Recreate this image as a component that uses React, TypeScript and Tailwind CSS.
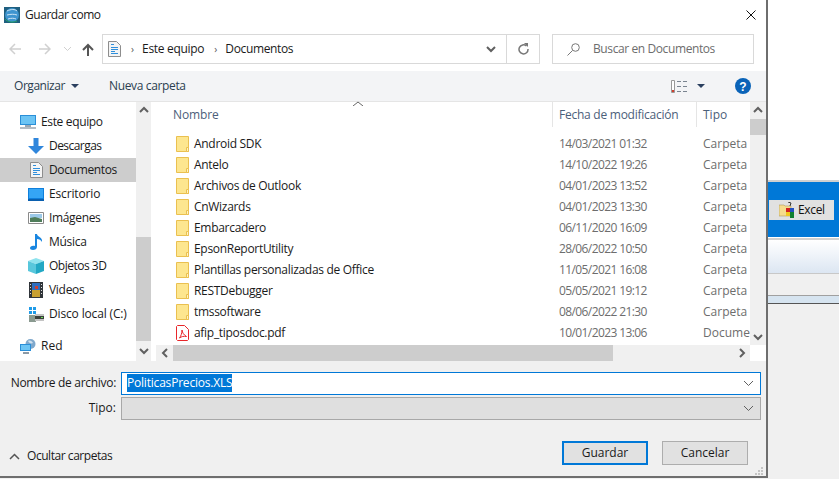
const font = "font-['Open_Sans','Noto_Sans',sans-serif]";

const sideItems = [
    { name: "Descargas", icon: "down", track: "tracking-[-0.55px]" },
    { name: "Documentos", icon: "doc", active: true, track: "tracking-[-0.35px]" },
    { name: "Escritorio", icon: "desk", track: "tracking-[-0.15px]" },
    { name: "Imágenes", icon: "img", track: "tracking-[-0.35px]" },
    { name: "Música", icon: "music", track: "tracking-[-0.3px]" },
    { name: "Objetos 3D", icon: "cube", track: "tracking-[-0.5px]" },
    { name: "Videos", icon: "film", track: "tracking-[-0.3px]" },
    { name: "Disco local (C:)", icon: "disk", track: "tracking-[-0.15px]" },
];

const files = [
    { name: "Android SDK", date: "14/03/2021 01:32", type: "Carpeta d" },
    { name: "Antelo", date: "14/10/2022 19:26", type: "Carpeta d" },
    { name: "Archivos de Outlook", date: "04/01/2023 13:52", type: "Carpeta d" },
    { name: "CnWizards", date: "04/01/2023 13:30", type: "Carpeta d" },
    { name: "Embarcadero", date: "06/11/2020 16:09", type: "Carpeta d" },
    { name: "EpsonReportUtility", date: "28/06/2022 10:50", type: "Carpeta d" },
    { name: "Plantillas personalizadas de Office", date: "11/05/2021 16:08", type: "Carpeta d" },
    { name: "RESTDebugger", date: "05/05/2021 19:12", type: "Carpeta d" },
    { name: "tmssoftware", date: "08/06/2022 21:30", type: "Carpeta d" },
    { name: "afip_tiposdoc.pdf", date: "10/01/2023 13:06", type: "Documen", pdf: true },
];

function Folder() {
    return (
        <svg width="13" height="16" viewBox="0 0 13 16" className="shrink-0">
            <path d="M.5.5h12v15H.5z" fill="#fde68f" stroke="#eac050" />
            <path d="M10.5 11.5h2v4h-2z" fill="#fff3c4" stroke="#eac050" />
        </svg>
    );
}

function Pdf() {
    return (
        <svg width="13" height="16" viewBox="0 0 13 16" className="shrink-0">
            <path d="M1.5.5h7l4 4v10l-1 1h-10l-1-1v-13z" fill="#fff" stroke="#e8272a" />
            <path d="M6 5c.5 3 1.500 4.500 4.500 6.500-3-.5-5 0-7 1.500C5 11 6 8 6 5z" fill="none" stroke="#e8272a" />
        </svg>
    );
}

function DocIcon() {
    return (
        <svg width="13" height="16" viewBox="0 0 13 16">
            <path d="M.5.5h8l4 4v11H.5z" fill="#f4f4f4" stroke="#8d8d8d" />
            <path d="M3 3.500h3M3 6.500h7M3 8.500h7M3 10.500h4M3 12.500h7" stroke="#2f8fdc" />
        </svg>
    );
}

function Chevron({ dir, color = "#606060" }: { dir: "up" | "down" | "left" | "right"; color?: string }) {
    const d = {
        up: "M2 7l4-4 4 4",
        down: "M2 4l4 4 4-4",
        left: "M8 2L4 6l4 4",
        right: "M4 2l4 4-4 4",
    }[dir];
    return (
        <svg width="12" height="12" viewBox="0 0 12 12">
            <path d={d} fill="none" stroke={color} strokeWidth="2" />
        </svg>
    );
}

function ThinDown() {
    return (
        <svg width="11" height="7" viewBox="0 0 11 7">
            <path d="M1 1l4.500 4.500L10 1" fill="none" stroke="#606060" />
        </svg>
    );
}

function SideIcon({ kind }: { kind: string }) {
    if (kind === "down")
        return (
            <svg width="16" height="16" viewBox="0 0 16 16">
                <path d="M5.500 0h5v8H16l-8 8-8-8h5.500z" fill="#2f86dc" />
            </svg>
        );
    if (kind === "doc") return <DocIcon />;
    if (kind === "desk")
        return (
            <svg width="16" height="13" viewBox="0 0 16 13">
                <path d="M0 0h16v13H0z" fill="#0f7fdc" />
                <path d="M1 1h14v9H1z" fill="#35a5f5" />
                <path d="M0 11h16v2H0z" fill="#0a5fae" />
            </svg>
        );
    if (kind === "img")
        return (
            <svg width="16" height="12" viewBox="0 0 16 12">
                <path d="M.5.5h15v11H.5z" fill="#fff" stroke="#8a8a8a" />
                <path d="M2 2h12v4H2z" fill="#9cc9e8" />
                <path d="M2 6l5-1 7 2v3H2z" fill="#4f7d5a" />
            </svg>
        );
    if (kind === "music")
        return (
            <svg width="13" height="16" viewBox="0 0 13 16">
                <path d="M5 0h2c0 3 6 3 5 8-1-2-3-3-5-3v8c0 2-2 3-4 3s-3-1-3-2 2-3 5-2z" fill="#1a86e0" />
            </svg>
        );
    if (kind === "cube")
        return (
            <svg width="16" height="16" viewBox="0 0 16 16">
                <path d="M8 0l8 3-8 3-8-3z" fill="#8fe3ee" />
                <path d="M0 3l8 3v10l-8-3z" fill="#58c7dc" />
                <path d="M16 3L8 6v10l8-3z" fill="#22a8c4" />
            </svg>
        );
    if (kind === "film")
        return (
            <svg width="14" height="16" viewBox="0 0 14 16">
                <path d="M0 0h14v16H0z" fill="#30353a" />
                <path d="M3 1h8v7H3z" fill="#2f6fc0" />
                <path d="M3 8h8v7H3z" fill="#c8a030" />
                <path d="M6 4h3v3H6z" fill="#d04030" />
                <path d="M1 2h1v1H1zM1 5h1v1H1zM1 8h1v1H1zM1 11h1v1H1zM12 2h1v1h-1zM12 5h1v1h-1zM12 8h1v1h-1zM12 11h1v1h-1z" fill="#ddd" />
            </svg>
        );
    return (
        <svg width="16" height="16" viewBox="0 0 16 16">
            <path d="M1 1h3v3H1zM5 1h3v3H5zM1 5h3v3H1zM5 5h3v3H5z" fill="#1f9be8" />
            <path d="M1 9h7v7H1z" fill="#8a9a90" />
            <path d="M7 8h9v7H7z" fill="#c4c4c4" />
            <path d="M7 10h9v3H7z" fill="#3a3f3a" />
            <path d="M13 11h2v1h-2z" fill="#6fe05a" />
        </svg>
    );
}

function Monitor() {
    return (
        <svg width="16" height="14" viewBox="0 0 16 14">
            <path d="M0 0h16v10H0z" fill="#2a8fd8" />
            <path d="M1 1h14v8H1z" fill="#6cc4f4" />
            <path d="M5 10h6v2H5z" fill="#9aa8b4" />
            <path d="M0 12h16v2H0z" fill="#b4bcc4" />
        </svg>
    );
}

function Network() {
    return (
        <svg width="16" height="15" viewBox="0 0 16 15">
            <circle cx="10.500" cy="5" r="5" fill="#7fa8cc" />
            <path d="M8 2c2-1 4 0 5 2-2 1-4 0-5-2z" fill="#cfe0ee" />
            <path d="M0 5h11v7H0z" fill="#2a8fd8" />
            <path d="M1 6h9v5H1z" fill="#6cc4f4" />
            <path d="M3 13h6v2H3z" fill="#8c9aa6" />
        </svg>
    );
}

function GlobeIcon() {
    return (
        <svg width="16" height="16" viewBox="0 0 16 16">
            <path d="M0 0h16v16H0z" fill="#1f5f80" />
            <circle cx="8" cy="8" r="7" fill="#3f95cf" />
            <path d="M3 4c4-2 8-2 10 0M3 8c4-1 7-1 10 0M4 12c3-1 6-1 8 0" stroke="#cfe6f5" fill="none" />
            <path d="M1 12c2 3 8 4 12 2" stroke="#27a36a" fill="none" />
        </svg>
    );
}

function ExcelIcon() {
    return (
        <svg width="16" height="16" viewBox="0 0 16 16" className="shrink-0">
            <path d="M0 3h5l1 1h6v10H0z" fill="#f6dc8c" stroke="#b09a60" strokeWidth=".6" />
            <path d="M9 0l3 1-1 3" stroke="#333" fill="none" />
            <path d="M7 6h4v4H7z" fill="#d02020" />
            <path d="M11 6h4v4h-4z" fill="#2050c0" />
            <path d="M7 10h4v4H7z" fill="#f0c820" />
            <path d="M11 10h4v6h-4z" fill="#108030" />
        </svg>
    );
}

function NavArrow({ right, color }: { right?: boolean; color: string }) {
    return (
        <svg width="12" height="12" viewBox="0 0 12 12" style={{ transform: right ? "scaleX(-1)" : undefined }}>
            <path d="M12 6H1.500M6 1L1 6l5 5" fill="none" stroke={color} strokeWidth="1.500" />
        </svg>
    );
}

export default function App() {
    return (
        <div className={`${font} flex h-[479px] w-[839px] overflow-hidden bg-[#f0f0f0] text-[12px] text-[#1a1a1a]`}>
            <div className="relative flex h-[478px] w-[768px] shrink-0 flex-col border-r-2 border-b-2 border-[#6e6e6e] bg-white">
                {/* title */}
                <div className="flex h-[30px] shrink-0 items-center pl-[4px] pr-[10px]">
                    <GlobeIcon />
                    <span className="ml-[5px] tracking-[-0.45px]">Guardar como</span>
                    <svg width="10" height="10" viewBox="0 0 10 10" className="ml-auto">
                        <path d="M.5.500l9 9M9.500.500l-9 9" stroke="#111" />
                    </svg>
                </div>

                {/* nav */}
                <div className="flex h-[41px] shrink-0 items-start pt-[4px]">
                    <div className="flex h-[30px] w-[102px] shrink-0 items-center pl-[9px]">
                        <NavArrow color="#d0d0d0" />
                        <span className="ml-[18px]"><NavArrow right color="#d0d0d0" /></span>
                        <span className="ml-[12px]">
                            <svg width="9" height="6" viewBox="0 0 9 6"><path d="M1 1l3.500 3.500L8 1" fill="none" stroke="#d0d0d0" /></svg>
                        </span>
                        <svg width="12" height="13" viewBox="0 0 12 13" className="ml-[10px]">
                            <path d="M6 13V2M1 7l5-5 5 5" fill="none" stroke="#555" strokeWidth="2" />
                        </svg>
                    </div>
                    <div className="flex h-[30px] w-[438px] shrink-0 items-center border border-[#d9d9d9] pl-[5px]">
                        <DocIcon />
                        <span className="ml-[10px] text-[10px] text-[#555]">›</span>
                        <span className="ml-[8px] tracking-[-0.3px]">Este equipo</span>
                        <span className="ml-[10px] text-[10px] text-[#555]">›</span>
                        <span className="ml-[8px] tracking-[-0.35px]">Documentos</span>
                        <div className="ml-auto flex h-full items-center">
                            <Chevron dir="down" />
                            <div className="ml-[9px] flex h-full w-[33px] items-center justify-center border-l border-[#d9d9d9]">
                                <svg width="12" height="12" viewBox="0 0 12 12">
                                    <path d="M9.500 3A4.500 4.500 0 1 0 11 6" fill="none" stroke="#777" strokeWidth="1.500" />
                                    <path d="M7 0h4v4z" fill="#777" />
                                </svg>
                            </div>
                        </div>
                    </div>
                    <div className="ml-[12px] flex h-[30px] w-[202px] shrink-0 items-center border border-[#d9d9d9] pl-[14px] text-[#6d6d6d]">
                        <svg width="13" height="13" viewBox="0 0 13 13">
                            <circle cx="8.500" cy="4.500" r="3.800" fill="none" stroke="#777" />
                            <path d="M5.500 7.500L.5 12.500" stroke="#777" />
                        </svg>
                        <span className="ml-[13px] tracking-[-0.4px]">Buscar en Documentos</span>
                    </div>
                </div>

                {/* toolbar */}
                <div className="flex h-[31px] shrink-0 items-center border-b border-[#e5e5e5] bg-[#f3f4f6] pl-[14px] pr-[15px] text-[#2c3e50]">
                    <span className="tracking-[-0.45px]">Organizar</span>
                    <svg width="8" height="4" viewBox="0 0 8 4" className="ml-[6px]"><path d="M0 0h8L4 4z" fill="#2a3f5f" /></svg>
                    <span className="ml-[30px] tracking-[-0.35px]">Nueva carpeta</span>
                    <svg width="16" height="13" viewBox="0 0 16 13" className="ml-auto">
                        <path d="M.5.500h3v12h-3z" fill="#fff" stroke="#999" />
                        <path d="M6 1.500h4M12 1.500h4M6 6.500h4M12 6.500h4M6 11.500h4M12 11.500h4" stroke="#7a8490" />
                        <path d="M1 10h2v2H1z" fill="#d04030" />
                    </svg>
                    <svg width="8" height="4" viewBox="0 0 8 4" className="ml-[10px]"><path d="M0 0h8L4 4z" fill="#2a3f5f" /></svg>
                    <svg width="16" height="16" viewBox="0 0 16 16" className="ml-[30px]">
                        <circle cx="8" cy="8" r="8" fill="#0a63b8" />
                        <text x="8" y="12.500" textAnchor="middle" fontSize="12" fontWeight="700" fill="#fff" fontFamily="Liberation Sans">?</text>
                    </svg>
                </div>

                {/* main */}
                <div className="flex h-[259px] shrink-0">
                    <div className="flex w-[136px] shrink-0 flex-col pt-[8px]">
                        <div className="flex h-[24px] items-center pl-[20px]">
                            <Monitor />
                            <span className="ml-[5px] tracking-[-0.35px]">Este equipo</span>
                        </div>
                        {sideItems.map((item) => (
                            <div key={item.name} className={`flex h-[24px] items-center ${item.active ? "bg-[#cdcdcd]" : ""}`}>
                                <span className="ml-[28px] flex w-[16px] justify-center">
                                    <SideIcon kind={item.icon} />
                                </span>
                                <span className={`ml-[5px] whitespace-nowrap ${item.track}`}>{item.name}</span>
                            </div>
                        ))}
                        <div className="mt-[8px] flex h-[24px] items-center pl-[20px]">
                            <Network />
                            <span className="ml-[5px]">Red</span>
                        </div>
                    </div>
                    <div className="flex w-[15px] shrink-0 flex-col bg-[#f0f0f0]">
                        <div className="flex h-[17px] items-center justify-center"><Chevron dir="up" /></div>
                        <div className="mt-[118px] h-[104px] bg-[#cdcdcd]" />
                        <div className="flex h-[20px] items-center justify-center"><Chevron dir="down" /></div>
                    </div>
                    <div className="flex w-[5px] shrink-0" />
                    <div className="flex min-w-0 flex-1 flex-col">
                        <div className="flex min-h-0 flex-1">
                            <div className="flex min-w-0 flex-1 flex-col">
                                <div className="relative flex h-[25px] shrink-0 items-center text-[#4c607a]">
                                    <span className="absolute left-[197px] top-[-1px] leading-none">
                                        <svg width="10" height="5" viewBox="0 0 10 5"><path d="M0 5l5-4 5 4" fill="none" stroke="#666" /></svg>
                                    </span>
                                    <div className="w-[396px] pl-[17px] tracking-[-0.1px]">Nombre</div>
                                    <div className="w-[144px] self-stretch flex items-center border-l border-[#e5e5e5] pl-[6px] tracking-[-0.25px]">Fecha de modificación</div>
                                    <div className="flex-1 self-stretch flex items-center border-l border-[#e5e5e5] pl-[6px]">Tipo</div>
                                </div>
                                <div className="flex flex-col pt-[6px]">
                                    {files.map((f) => (
                                        <div key={f.name} className="flex h-[21px] items-center overflow-hidden whitespace-nowrap">
                                            <div className="flex w-[397px] shrink-0 items-center pl-[20px]">
                                                {f.pdf ? <Pdf /> : <Folder />}
                                                <span className="ml-[5px] tracking-[-0.3px]">{f.name}</span>
                                            </div>
                                            <div className="w-[144px] shrink-0 pl-[6px] tracking-[-0.6px] text-[#6d6d6d]">{f.date}</div>
                                            <div className="w-[54px] shrink-0 overflow-hidden pl-[6px] text-[#6d6d6d]">{f.type}</div>
                                        </div>
                                    ))}
                                </div>
                            </div>
                            <div className="flex w-[16px] shrink-0 flex-col bg-[#f0f0f0]">
                                <div className="flex h-[17px] items-center justify-center"><Chevron dir="up" /></div>
                                <div className="h-[16px] bg-[#cdcdcd]" />
                                <div className="flex-1" />
                                <div className="flex h-[16px] items-center justify-center"><Chevron dir="down" /></div>
                            </div>
                        </div>
                        <div className="flex h-[16px] shrink-0">
                            <div className="flex flex-1 bg-[#f0f0f0]">
                                <div className="flex w-[17px] items-center justify-center"><Chevron dir="left" /></div>
                                <div className="w-[440px] bg-[#cdcdcd]" />
                                <div className="flex-1" />
                                <div className="flex w-[17px] items-center justify-center"><Chevron dir="right" /></div>
                            </div>
                            <div className="w-[16px] bg-white" />
                        </div>
                    </div>
                </div>

                {/* form */}
                <div className="relative flex min-h-0 flex-1 flex-col bg-[#f0f0f0] pt-[10px]">
                    <div className="flex h-[24px] items-center">
                        <span className="w-[116px] text-right tracking-[-0.3px]">Nombre de archivo:</span>
                        <div className="ml-[5px] flex h-[23px] w-[640px] items-center border border-[#0078d7] bg-white pl-[5px] pr-[6px]">
                            <span className="bg-[#0078d7] leading-[18px] text-white tracking-[-0.2px]">PoliticasPrecios.XLS</span>
                            <span className="ml-auto"><ThinDown /></span>
                        </div>
                    </div>
                    <div className="mt-[1px] flex h-[24px] items-center">
                        <span className="w-[116px] text-right">Tipo:</span>
                        <div className="ml-[5px] flex h-[23px] w-[640px] items-center border border-[#a8a8a8] bg-[#dfdfdf] pr-[6px]">
                            <span className="ml-auto"><ThinDown /></span>
                        </div>
                    </div>
                    <div className="mt-[20px] flex items-center pr-[18px]">
                        <svg width="11" height="7" viewBox="0 0 11 7" className="ml-[9px] mt-[7px]"><path d="M1 6l4.500-4.500L10 6" fill="none" stroke="#555" strokeWidth="1.500" /></svg>
                        <span className="ml-[7px] mt-[7px] tracking-[-0.45px]">Ocultar carpetas</span>
                        <button className="ml-auto h-[24px] w-[86px] border-2 border-[#0078d7] bg-[#e1e1e1]">Guardar</button>
                        <button className="ml-[14px] h-[24px] w-[86px] border border-[#adadad] bg-[#e1e1e1]">Cancelar</button>
                    </div>
                    <svg width="8" height="8" viewBox="0 0 8 8" className="absolute bottom-[1px] right-[3px]">
                        <path d="M6 0h2v2H6zM3 3h2v2H3zM6 3h2v2H6zM0 6h2v2H0zM3 6h2v2H3zM6 6h2v2H6z" fill="#c4c4c4" />
                    </svg>
                </div>
            </div>

            {/* app behind */}
            <div className="flex flex-1 flex-col">
                <div className="h-[180px] bg-white" />
                <div className="h-[2px] bg-[#d0d0d0]" />
                <div className="flex h-[55px] items-center bg-[#0078d7] pl-[1px]">
                    <div className="flex h-[20px] w-[65px] items-center bg-[#e1e1e1] pl-[10px]">
                        <ExcelIcon />
                        <span className="ml-[3px] text-[#111] tracking-[-0.35px]">Excel</span>
                    </div>
                </div>
                <div className="h-[1px] bg-white" />
                <div className="h-[2px] bg-[#d0d0d0]" />
                <div className="h-[33px] bg-gradient-to-b from-white to-[#dce6f2]" />
                <div className="h-[1px] bg-[#c8c8c8]" />
                <div className="h-[21px] bg-[#f0f0f0]" />
                <div className="h-[1px] bg-[#a0a0a0]" />
                <div className="h-[7px] bg-[#d6e4f0]" />
                <div className="h-[1px] bg-[#555]" />
                <div className="flex-1 bg-[#f0f0f0]" />
            </div>
        </div>
    );
}
